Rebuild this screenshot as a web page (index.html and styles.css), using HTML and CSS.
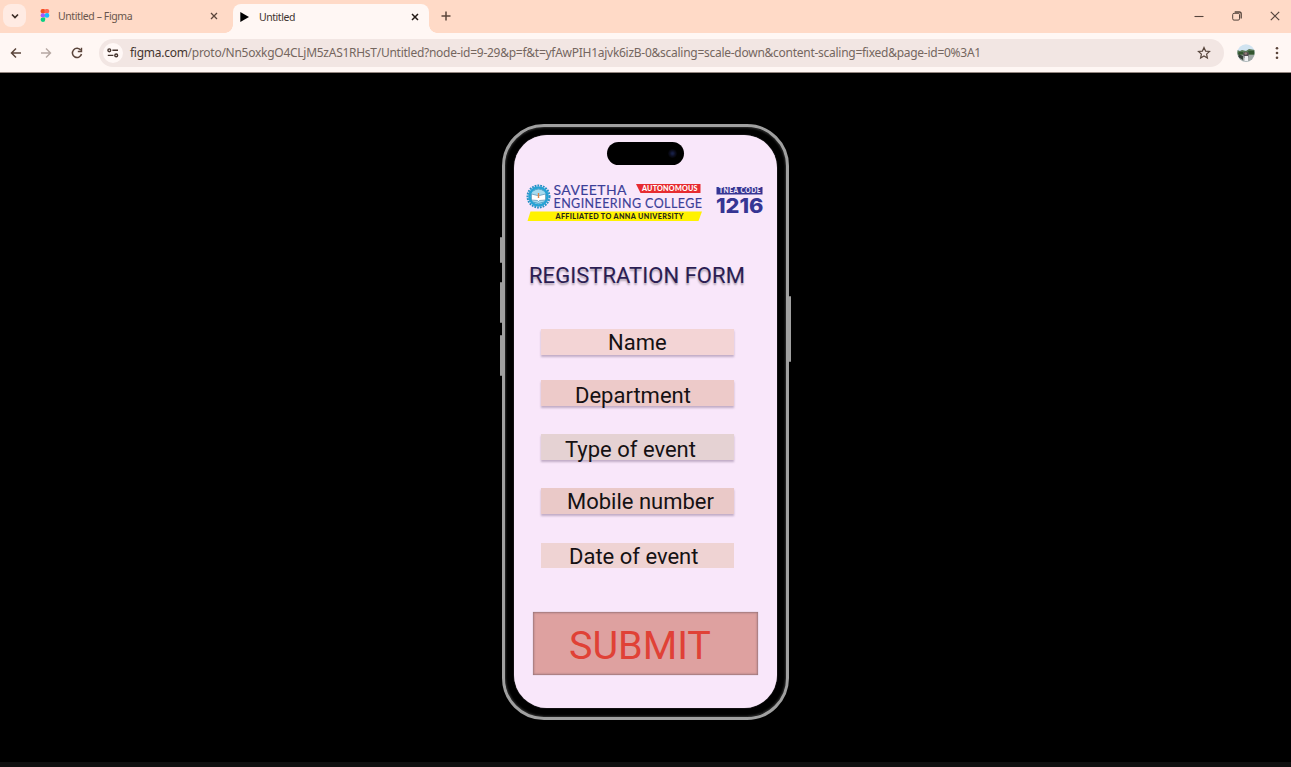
FILE: index.html
```html
<!DOCTYPE html>
<html lang="en">
<head>
<meta charset="utf-8">
<title>Untitled</title>
<link rel="stylesheet" href="styles.css">
</head>
<body>
<header class="tabs">
  <button class="tab-search" aria-label="Search tabs"><svg width="10" height="10" viewBox="0 0 10 10"><path d="M2 3.5l3 3 3-3" fill="none" stroke="#3b2c26" stroke-width="1.7"/></svg></button>
  <div class="tab idle">
    <svg class="favicon" width="10" height="13" viewBox="0 0 10 13"><rect x=".6" y="0" width="4.8" height="4.4" rx="1.8" fill="#f24e1e"/><rect x="4.4" y="0" width="4.8" height="4.4" rx="1.8" fill="#ff6554"/><rect x=".6" y="4.2" width="4.6" height="4.4" rx="2.1" fill="#a259ff"/><circle cx="7" cy="6.4" r="2.3" fill="#1abcfe"/><path d="M2.8 8.5h2.4v2.2a2.3 2.2 0 1 1-2.4-2.2z" fill="#0acf83"/></svg>
    <span class="tab-title first">Untitled – Figma</span>
    <svg class="close" width="8" height="8" viewBox="0 0 8 8"><path d="M1 1l6 6M7 1L1 7" stroke="#5b453b" stroke-width="1.3"/></svg>
  </div>
  <div class="tab active">
    <svg class="play" width="9" height="10" viewBox="0 0 9 10"><path d="M.3 0L9 5 .3 10z" fill="#000"/></svg>
    <span class="tab-title second">Untitled</span>
    <svg class="close" width="8" height="8" viewBox="0 0 8 8"><path d="M1 1l6 6M7 1L1 7" stroke="#231a16" stroke-width="1.5"/></svg>
  </div>
  <svg class="plus" width="10" height="10" viewBox="0 0 10 10"><path d="M5 .5v9M.5 5h9" stroke="#5b453b" stroke-width="1.5"/></svg>
  <div class="window-controls">
    <svg width="10" height="10" viewBox="0 0 10 10"><path d="M.5 5.5h9" stroke="#56453d" stroke-width="1.1"/></svg>
    <svg width="10" height="10" viewBox="0 0 10 10"><rect x=".7" y="2.3" width="6.8" height="6.8" rx="1.3" fill="none" stroke="#56453d"/><path d="M2.7 1h4.6q1.9 0 1.9 1.9v4.6" fill="none" stroke="#56453d" stroke-width="1.3"/></svg>
    <svg width="10" height="10" viewBox="0 0 10 10"><path d="M.8.8l8.4 8.4M9.2.8L.8 9.2" stroke="#56453d" stroke-width="1.2"/></svg>
  </div>
</header>
<nav class="toolbar">
  <svg width="12" height="12" viewBox="0 0 12 12"><path d="M11 6H1.8M6 1.5L1.5 6 6 10.5" fill="none" stroke="#5b453b" stroke-width="1.5"/></svg>
  <svg class="forward" width="12" height="12" viewBox="0 0 12 12"><path d="M1 6h9.2M6 1.5L10.5 6 6 10.5" fill="none" stroke="#b6a8a2" stroke-width="1.4"/></svg>
  <svg class="reload" width="12" height="12" viewBox="0 0 12 12"><path d="M9.8 3.3A4.6 4.6 0 1 0 10.5 7" fill="none" stroke="#5b453b" stroke-width="1.5"/><path d="M11.2 .8v4.4H6.8V3.8h3V.8z" fill="#5b453b"/></svg>
  <div class="address">
    <span class="site-info"><svg width="12" height="10" viewBox="0 0 12 10"><g fill="none" stroke="#44342e" stroke-width="1.4"><circle cx="2.3" cy="2.3" r="1.4"/><path d="M5.4 2.3H11M.8 7.4h5.6"/><circle cx="9.2" cy="7.4" r="1.4"/></g></svg></span>
    <span class="url"><b>figma.com</b>/proto/Nn5oxkgO4CLjM5zAS1RHsT/Untitled?node-id=9-29&amp;p=f&amp;t=yfAwPIH1ajvk6izB-0&amp;scaling=scale-down&amp;content-scaling=fixed&amp;page-id=0%3A1</span>
    <svg class="star" width="14" height="14" viewBox="0 0 14 14"><path d="M7 1.5l1.6 3.6 3.9.4-2.9 2.6.8 3.9L7 10l-3.4 2 .8-3.9-2.9-2.6 3.9-.4z" fill="none" stroke="#59483f" stroke-width="1.2"/></svg>
  </div>
  <svg class="avatar" width="18" height="18" viewBox="0 0 18 18"><defs><clipPath id="round"><circle cx="9" cy="9" r="8.7"/></clipPath><filter id="soft"><feGaussianBlur stdDeviation=".5"/></filter></defs><g clip-path="url(#round)"><path fill="#d0e3f0" d="M0 0h18v18H0z"/><g filter="url(#soft)"><path d="M0 6l3 1 2-1 4 1 3-2 6 1v6H0z" fill="#577452"/><path d="M11 7h6v3h-5zM2 8h4v2H1z" fill="#31552f"/><path d="M0 11h18v7H0z" fill="#a1a8a6"/><path d="M2 10l4 2v4L1 13z" fill="#344039"/><path d="M6 9q3-2 6 0l-1 5H7z" fill="#514c51"/><path d="M7.5 12h3.5v5H7.5z" fill="#eeeff2"/><circle cx="8.8" cy="9.5" r="1.3" fill="#967e78"/></g></g></svg>
  <svg class="more" width="4" height="14" viewBox="0 0 4 14"><g fill="#5b453b"><circle cx="2" cy="2.3" r="1.3"/><circle cx="2" cy="7" r="1.3"/><circle cx="2" cy="11.7" r="1.3"/></g></svg>
</nav>
<main class="stage">
  <section class="phone">
    <i class="side-key action"></i><i class="side-key up"></i><i class="side-key down"></i><i class="side-key power"></i>
    <div class="screen">
      <div class="island"><span class="lens"></span></div>
      <svg class="college" width="240" height="40" viewBox="0 0 240 40" font-family="Lato, sans-serif">
        <circle cx="12.5" cy="14.5" r="11" fill="none" stroke="#278fc4" stroke-width="2" stroke-dasharray="1.8 1"/>
        <circle cx="12.5" cy="14.5" r="9" fill="#a7dbee" stroke="#26a3d5" stroke-width="2.6"/>
        <path d="M5.5 12l6 1.5 1 1 1-1 6-1.5v6l-6 .5-1 1-1-1-6-.5z" fill="#fff" stroke="#508cb2" stroke-width=".7"/>
        <path d="M12.5 11v5" stroke="#e38647" stroke-width="1.4"/><path d="M7 9q5.500-4 11 0M7 20q5.500 3 11 0" fill="none" stroke="#4ca1c9"/>
        <g fill="#3c3f98" stroke="#3c3f98" stroke-width=".15">
          <text x="27.500" y="13" font-size="14" textLength="73" lengthAdjust="spacing">SAVEETHA</text>
          <text x="27.500" y="25.500" font-size="12.500" textLength="148.500" lengthAdjust="spacing">ENGINEERING COLLEGE</text>
        </g>
        <path d="M110 2h64.500v9h-60z" fill="#e72b31"/>
        <text x="116" y="9.200" font-size="7.200" font-weight="900" fill="#fff" textLength="55.500" lengthAdjust="spacing">AUTONOMOUS</text>
        <path d="M4.500 29.500H176l-3.500 9.500H1.500z" fill="#fff200"/>
        <text x="29.500" y="36.800" font-size="7.200" font-weight="900" fill="#282719" textLength="128" lengthAdjust="spacing">AFFILIATED TO ANNA UNIVERSITY</text>
        <path d="M190.500 5h46v7.500h-46z" fill="#363593"/>
        <text x="193" y="11.100" font-size="6.600" font-weight="900" fill="#eee2f5" textLength="41.500" lengthAdjust="spacing">TNEA CODE</text>
        <text x="190" y="30.800" font-family="Inter, sans-serif" font-size="20.500" font-weight="800" fill="#363593" textLength="47.500" lengthAdjust="spacingAndGlyphs">1216</text>
      </svg>
      <h1 class="heading">REGISTRATION FORM</h1>
      <form class="fields">
        <div class="field name">Name</div>
        <div class="field department">Department</div>
        <div class="field type">Type of event</div>
        <div class="field mobile">Mobile number</div>
        <div class="field date">Date of event</div>
      </form>
      <div class="submit">SUBMIT</div>
    </div>
  </section>
</main>
<footer class="taskbar"></footer>
</body>
</html>
```
FILE: styles.css
```css
* { box-sizing: border-box; }
body { margin: 0; height: 767px; display: flex; flex-direction: column; background: #000; overflow: hidden; font-family: "Noto Sans", sans-serif; }
svg { display: block; flex: none; }
.tabs { height: 33px; flex: none; background: #ffdac7; display: flex; align-items: center; padding: 0 11px 2px 3px; }
.tab-search { width: 23px; height: 23px; border: 0; border-radius: 8px; background: #ffebe3; padding: 0; display: flex; align-items: center; justify-content: center; }
.tab { display: flex; align-items: center; }
.idle { width: 207px; padding: 0 15px 0 14px; }
.active { position: relative; width: 196px; height: 29px; align-self: flex-end; margin-bottom: -2px; background: #fff7f4; border-radius: 8px 8px 0 0; padding: 0 10px 4px 7px; }
.active::before, .active::after { content: ""; position: absolute; bottom: 0; width: 8px; height: 8px; }
.active::before { left: -8px; background: radial-gradient(circle at 0 0, transparent 7.5px, #fff7f4 8px); }
.active::after { right: -8px; background: radial-gradient(circle at 100% 0, transparent 7.5px, #fff7f4 8px); }
.tab-title { font-size: 10.5px; line-height: 16px; white-space: nowrap; color: #69564c; }
.first { margin-left: 8px; letter-spacing: -.4px; }
.second { margin-left: 10px; color: #3e332f; letter-spacing: -.45px; }
.close { margin-left: auto; }
.plus { margin-left: 12px; }
.window-controls { margin-left: auto; display: flex; gap: 28px; }
.toolbar { height: 40px; flex: none; background: #fff7f4; border-bottom: 1px solid #92857f; display: flex; align-items: center; padding: 0 12px 0 10px; }
.forward { margin-left: 18px; }
.reload { margin-left: 19px; }
.address { margin-left: 16px; width: 1125px; height: 28px; border-radius: 14px; background: #f2e6e3; display: flex; align-items: center; padding: 0 13px 0 4px; }
.site-info { width: 20px; height: 20px; border-radius: 50%; background: #fff8f6; display: flex; align-items: center; justify-content: center; }
.url { margin-left: 7px; color: #75665f; font-size: 12px; line-height: 18px; white-space: nowrap; letter-spacing: -.268px; }
.url b { font-weight: 400; color: #44352f; }
.star { margin-left: auto; }
.avatar { margin-left: 13px; }
.more { margin-left: auto; }
.stage { flex: 1; display: flex; justify-content: center; align-items: flex-start; padding-top: 51px; }
.phone { position: relative; width: 287px; height: 596px; border: 3px solid #a0a0a0; border-radius: 42px; background: #000; padding: 9px; box-shadow: inset 0 0 2px 1px #2e2e2e; }
.side-key { position: absolute; width: 2px; background: #a0a0a0; border-radius: 1px; left: -5px; }
.action { top: 110px; height: 26px; }
.up { top: 155px; height: 41px; }
.down { top: 208px; height: 41px; }
.power { left: auto; right: -5px; top: 169px; height: 66px; }
.screen { width: 263px; height: 573px; margin-top: -1px; border-radius: 33px; background: #f9e7fa; display: flex; flex-direction: column; box-shadow: 0 0 1px #b3a7b4; }
.island { margin: 7px 0 0 93px; width: 77px; height: 23px; border-radius: 12px; background: #000; display: flex; align-items: center; justify-content: flex-end; padding-right: 7px; flex: none; }
.lens { width: 9px; height: 9px; border-radius: 50%; background: radial-gradient(#172047 10%, #0b0c1d 45%, #020204 75%); }
.college { margin: 17px 0 0 12px; }
.heading { margin: 40px 0 0 15px; font: 400 22px/28px Roboto, sans-serif; letter-spacing: .04px; color: #2b1d53; text-shadow: 0 2px 2px rgba(0,0,0,.3); white-space: nowrap; flex: none; }
.fields { margin: 39px 0 0 27px; width: 193px; }
.field { height: 26px; font: 22px/27px Roboto, sans-serif; color: #151113; white-space: nowrap; box-shadow: 0 2px 2px rgba(65,35,80,.3); }
.name { background: #f3d4d5; padding-left: 67px; }
.department { margin-top: 25px; background: #edcac9; padding-left: 34px; line-height: 31px; }
.type { margin-top: 28px; background: #e5d2d3; padding-left: 24px; line-height: 31px; }
.mobile { margin-top: 28px; background: #eac9c8; padding-left: 26px; line-height: 28px; }
.date { margin-top: 29px; height: 25px; background: #efd3d3; padding-left: 28px; box-shadow: none; }
.submit { margin: 44px 0 0 19px; width: 225px; height: 63px; background: #dea1a0; box-shadow: inset 0 0 2px 1px #9e777b, 0 0 1px #b6a4b3; padding-left: 36px; font: 39.5px/68px Roboto, sans-serif; color: #e04136; }
.taskbar { height: 5px; flex: none; background: #101010; }
```
